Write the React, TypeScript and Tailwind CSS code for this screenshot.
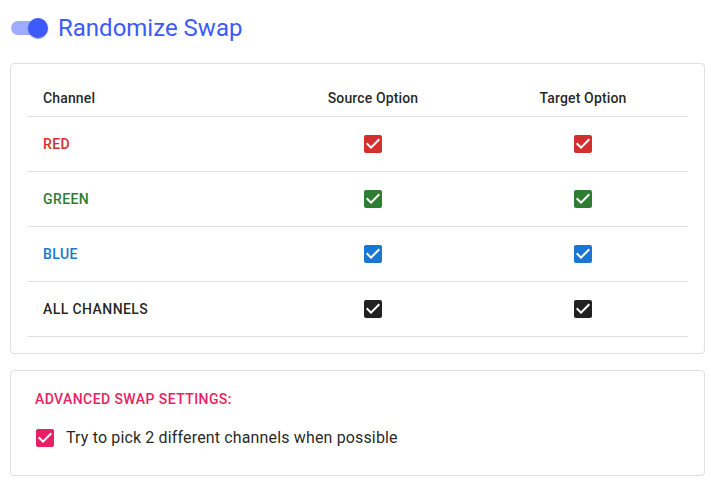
const rows = [
  { label: "RED", text: "text-[#d32f2f]", box: "#d32f2f" },
  { label: "GREEN", text: "text-[#2e7d32]", box: "#2e7d32" },
  { label: "BLUE", text: "text-[#1976d2]", box: "#1976d2" },
  { label: "ALL CHANNELS", text: "text-[rgba(0,0,0,0.87)]", box: "#212121" },
];

function CheckedBox({ color }: { color: string }) {
  return (
    <svg viewBox="0 0 24 24" width={24} height={24} className="block">
      <path
        fill={color}
        d="M19 3H5c-1.11 0-2 .9-2 2v14c0 1.1.89 2 2 2h14c1.11 0 2-.9 2-2V5c0-1.1-.89-2-2-2zm-9 14l-5-5 1.41-1.41L10 14.17l7.59-7.59L19 8l-9 9z"
      />
    </svg>
  );
}

export default function App() {
  return (
    <div className="min-h-screen bg-white pl-[10px] font-['Roboto',sans-serif] text-[rgba(0,0,0,0.87)]">
      <div className="mt-[12px] flex h-[32px] items-center">
        <div className="relative ml-[1px] h-[20px] w-[37px]">
          <span className="absolute left-0 top-[3px] h-[14px] w-[34px] rounded-full bg-[#3d5afe] opacity-50" />
          <span className="absolute left-[17px] top-0 h-[20px] w-[20px] rounded-full bg-[#3d5afe] shadow-[0_2px_1px_-1px_rgba(0,0,0,0.2),0_1px_1px_0_rgba(0,0,0,0.14),0_1px_3px_0_rgba(0,0,0,0.12)]" />
        </div>
        <h1 className="ml-[10px] text-[24px] font-normal leading-[32px] text-[#3d5afe]">Randomize Swap</h1>
      </div>

      <div className="mt-[19px] w-[695px] rounded-[4px] border border-[#e0e0e0] p-4">
        <div className="grid h-[37px] grid-cols-[241px_1fr_1fr] items-center border-b border-[#e0e0e0] text-[14px] font-medium tracking-[0.01em]">
          <span className="pl-4">Channel</span>
          <span className="text-center">Source Option</span>
          <span className="text-center">Target Option</span>
        </div>
        {rows.map((r) => (
          <div
            key={r.label}
            className="grid h-[55px] grid-cols-[241px_1fr_1fr] items-center border-b border-[#e0e0e0] text-[14px]"
          >
            <span className={`pl-4 font-medium tracking-[0.03em] ${r.text}`}>{r.label}</span>
            <span className="flex justify-center">
              <CheckedBox color={r.box} />
            </span>
            <span className="flex justify-center">
              <CheckedBox color={r.box} />
            </span>
          </div>
        ))}
      </div>

      <div className="mt-[16px] w-[695px] rounded-[4px] border border-[#e0e0e0] px-[24px] pb-[16px] pt-[16px]">
        <div className="text-[14px] font-medium leading-[24px] tracking-[0.03em] text-[#e91e63]">
          ADVANCED SWAP SETTINGS:
        </div>
        <label className="mt-[6px] flex h-[42px] items-center">
          <span className="-ml-[2px]">
            <CheckedBox color="#e91e63" />
          </span>
          <span className="ml-[9px] text-[16px] leading-[24px] tracking-[0.15px]">
            Try to pick 2 different channels when possible
          </span>
        </label>
      </div>
    </div>
  );
}
